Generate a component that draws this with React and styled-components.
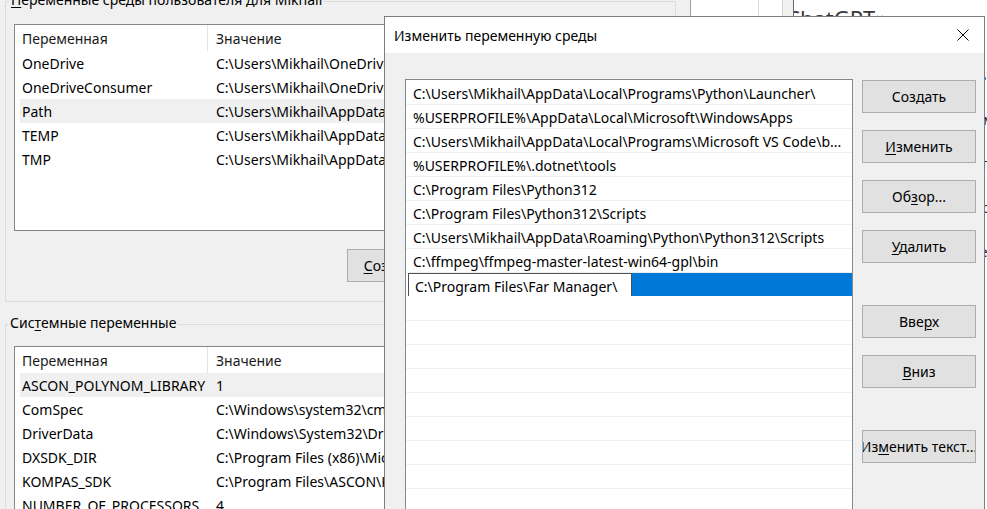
import React from 'react';
import styled, { createGlobalStyle } from 'styled-components';

const GlobalStyle = createGlobalStyle`
  html, body { margin: 0; padding: 0; background: #f0f0f0; }
  body {
    font-family: "Noto Sans", "Open Sans", sans-serif;
    font-size: 14px;
    color: #000;
    overflow: hidden;
  }
  * { box-sizing: border-box; }
`;

const Desktop = styled.div`
  position: relative;
  width: 987px;
  height: 509px;
  overflow: hidden;
  display: flex;
`;

/* ---------- background "Environment variables" window ---------- */
const EnvWindow = styled.div`
  width: 676px;
  flex: none;
  background: #f0f0f0;
  display: flex;
  flex-direction: column;
  padding-left: 5px;
`;

const GroupBox = styled.section`
  display: flex;
  flex-direction: column;
  margin-top: ${p => p.$top}px;
  flex: ${p => (p.$grow ? 1 : 'none')};
`;

const GroupHead = styled.div`
  height: 20px;
  display: flex;
  line-height: 20px;
  &::before {
    content: '';
    width: ${p => p.$lead}px;
    height: 8px;
    align-self: flex-end;
    border-top: 1px solid #dcdcdc;
    border-left: 1px solid #dcdcdc;
  }
  &::after {
    content: '';
    flex: 1;
    height: 8px;
    align-self: flex-end;
    border-top: 1px solid #dcdcdc;
    border-right: 1px solid #dcdcdc;
  }
`;

const GroupTitle = styled.span`
  padding: 0 2px;
  white-space: nowrap;
  color: #000;
`;

const GroupBody = styled.div`
  border: 1px solid #dcdcdc;
  border-top: none;
  ${p => (p.$open ? 'border-bottom: none;' : '')}
  padding: ${p => p.$pad};
  display: flex;
  flex-direction: column;
  flex: 1;
`;

const ListView = styled.div`
  background: #fff;
  border: 1px solid #828790;
  padding-left: 5px;
  height: ${p => p.$h || 'auto'};
  flex: ${p => (p.$grow ? 1 : 'none')};
  overflow: hidden;
`;

const LVHeader = styled.div`
  display: grid;
  grid-template-columns: 194px 1fr;
  height: 26px;
  align-items: center;
  color: #1a1a1a;
`;

const LVHeadCell = styled.div`
  position: relative;
  padding-left: 2px;
  height: 100%;
  display: flex;
  align-items: center;
  &::after {
    content: ${p => (p.$sep ? "''" : 'none')};
    position: absolute;
    right: 6px;
    top: 0;
    bottom: 0;
    width: 1px;
    background: #e5e5e5;
  }
`;

const LVRow = styled.div`
  display: grid;
  grid-template-columns: 194px 1fr;
  height: 24px;
  align-items: center;
  background: ${p => (p.$hl ? '#f0f0f0' : 'transparent')};
  white-space: nowrap;
`;

const LVCell = styled.div`
  padding-left: 2px;
  overflow: hidden;
`;

const ButtonRow = styled.div`
  display: flex;
  justify-content: flex-end;
  gap: 9px;
  margin-top: 18px;
`;

const WinButton = styled.button`
  font: inherit;
  color: #000;
  background: #e1e1e1;
  border: 1px solid #adadad;
  height: 33px;
  width: ${p => p.$w || 114}px;
  padding: 0;
  display: flex;
  align-items: center;
  justify-content: center;
  white-space: nowrap;
  overflow: hidden;
  flex: none;
`;

const Mn = styled.span`
  text-decoration: underline;
  text-underline-offset: 2px;
`;

/* ---------- browser window behind, at right ---------- */
const Browser = styled.div`
  flex: 1;
  display: flex;
  background: #fff;
`;

const BrowserGap = styled.div`
  width: 14px;
  background: #f0f0f0;
`;

const BrowserPane = styled.div`
  width: ${p => p.$w}px;
  border-left: 1px solid ${p => p.$line};
  background: ${p => p.$bg || '#fff'};
`;

const BrowserContent = styled.div`
  flex: 1;
  overflow: hidden;
  padding-top: 7px;
  border-left: 1px solid #6a6a6a;
`;

const BrowserTitle = styled.div`
  font-size: 22px;
  line-height: 22px;
  color: #3a3a3a;
  white-space: nowrap;
  text-indent: -8px;
  display: flex;
  align-items: center;
  gap: 8px;
`;

const Chevron = styled.span`
  font-size: 13px;
  color: #9a9a9a;
`;

const BrowserText = styled.div`
  margin-top: 24px;
  padding-left: 4px;
  font-size: 15px;
  line-height: 44px;
  color: #222;
  white-space: nowrap;
`;

/* ---------- the edit dialog ---------- */
const Dialog = styled.div`
  position: absolute;
  left: 384px;
  top: 16px;
  width: 601px;
  height: 520px;
  border: 1px solid #7d7d7d;
  background: #f0f0f0;
  display: flex;
  flex-direction: column;
`;

const TitleBar = styled.div`
  height: 36px;
  background: #fff;
  display: flex;
  align-items: center;
  justify-content: space-between;
  padding-left: 9px;
  flex: none;
`;

const TitleText = styled.span`
  font-size: 14px;
  color: #000;
  padding-top: 1px;
`;

const CloseBtn = styled.div`
  width: 42px;
  height: 100%;
  display: flex;
  align-items: center;
  justify-content: center;
`;

const DialogBody = styled.div`
  flex: 1;
  display: flex;
  padding: 26px 0 0 20px;
  gap: 9px;
`;

const PathList = styled.div`
  width: 448px;
  background: #fff;
  border: 1px solid #828790;
  padding-top: 1px;
  overflow: hidden;
  flex: none;
`;

const PathRow = styled.div`
  height: 24px;
  border-bottom: 1px solid #efefef;
  padding-left: ${p => (p.$sel ? 2 : 7)}px;
  display: flex;
  align-items: center;
  white-space: nowrap;
  overflow: hidden;
  ${p => (p.$sel ? 'border-bottom-color: transparent;' : '')}
`;

const PathText = styled.span`
  padding-top: 1px;
`;

const EditBox = styled.div`
  width: 224px;
  height: 25px;
  align-self: flex-start;
  border: 1px solid #505050;
  background: #fff;
  padding-left: 6px;
  display: flex;
  align-items: center;
  flex: none;
`;

const SelFill = styled.div`
  flex: 1;
  align-self: flex-start;
  height: 24px;
  background: #0078d7;
`;

const ButtonColumn = styled.div`
  display: flex;
  flex-direction: column;
  gap: 42px;
  padding-top: 1px;
`;

const ButtonGroup = styled.div`
  display: flex;
  flex-direction: column;
  gap: 17px;
`;

const userVars = [
  ['OneDrive', 'C:\\Users\\Mikhail\\OneDrive'],
  ['OneDriveConsumer', 'C:\\Users\\Mikhail\\OneDrive'],
  ['Path', 'C:\\Users\\Mikhail\\AppData\\Local\\Programs\\Python\\Launcher\\;%USERPROFILE%\\AppData', true],
  ['TEMP', 'C:\\Users\\Mikhail\\AppData\\Local\\Temp'],
  ['TMP', 'C:\\Users\\Mikhail\\AppData\\Local\\Temp'],
];

const sysVars = [
  ['ASCON_POLYNOM_LIBRARY', '1', true],
  ['ComSpec', 'C:\\Windows\\system32\\cmd.exe'],
  ['DriverData', 'C:\\Windows\\System32\\Drivers\\DriverData'],
  ['DXSDK_DIR', 'C:\\Program Files (x86)\\Microsoft DirectX SDK (June 2010)\\'],
  ['KOMPAS_SDK', 'C:\\Program Files\\ASCON\\KOMPAS-3D v22\\SDK\\'],
  ['NUMBER_OF_PROCESSORS', '4'],
];

const paths = [
  'C:\\Users\\Mikhail\\AppData\\Local\\Programs\\Python\\Launcher\\',
  '%USERPROFILE%\\AppData\\Local\\Microsoft\\WindowsApps',
  'C:\\Users\\Mikhail\\AppData\\Local\\Programs\\Microsoft VS Code\\b...',
  '%USERPROFILE%\\.dotnet\\tools',
  'C:\\Program Files\\Python312',
  'C:\\Program Files\\Python312\\Scripts',
  'C:\\Users\\Mikhail\\AppData\\Roaming\\Python\\Python312\\Scripts',
  'C:\\ffmpeg\\ffmpeg-master-latest-win64-gpl\\bin',
];

function VarList({ rows, grow, h }) {
  return (
    <ListView $grow={grow} $h={h}>
      <LVHeader>
        <LVHeadCell $sep>Переменная</LVHeadCell>
        <LVHeadCell>Значение</LVHeadCell>
      </LVHeader>
      {rows.map(([n, v, hl]) => (
        <LVRow key={n} $hl={hl}>
          <LVCell>{n}</LVCell>
          <LVCell>{v}</LVCell>
        </LVRow>
      ))}
    </ListView>
  );
}

export default function App() {
  return (
    <>
      <GlobalStyle />
      <Desktop>
        <EnvWindow>
          <GroupBox $top={-10}>
            <GroupHead $lead={3}>
              <GroupTitle><Mn>П</Mn>еременные среды пользователя для Mikhail</GroupTitle>
            </GroupHead>
            <GroupBody $pad="14px 13px 19px 8px">
              <VarList rows={userVars} h="207px" />
              <ButtonRow>
                <WinButton $w={99}><span><Mn>С</Mn>оздать...</span></WinButton>
                <WinButton $w={99}><span><Mn>И</Mn>зменить...</span></WinButton>
                <WinButton $w={99}><span><Mn>У</Mn>далить</span></WinButton>
              </ButtonRow>
            </GroupBody>
          </GroupBox>
          <GroupBox $top={11} $grow>
            <GroupHead $lead={2}>
              <GroupTitle>Сис<Mn>т</Mn>емные переменные</GroupTitle>
            </GroupHead>
            <GroupBody $pad="13px 13px 0 8px" $open>
              <VarList rows={sysVars} grow />
            </GroupBody>
          </GroupBox>
        </EnvWindow>

        <Browser>
          <BrowserGap />
          <BrowserPane $w={68} $line="#a0a0a0" />
          <BrowserPane $w={24} $line="#dadada" />
          <BrowserPane $w={11} $line="#d4d4d4" $bg="#f0f0f0" />
          <BrowserContent>
            <BrowserTitle>ChatGPT <Chevron>∨</Chevron></BrowserTitle>
            <BrowserText>
              <div>Привет! Чем могу помочь?</div>
              <div>Чтобы добавить программу в PATH</div>
              <div>Откройте параметры системы</div>
              <div>Нажмите «Переменные среды»</div>
              <div>Выберите Path и нажмите</div>
              <div>Добавьте путь к папке</div>
              <div>Сохраните изменения</div>
              <div>Перезапустите терминал</div>
              <div>Готово</div>
            </BrowserText>
          </BrowserContent>
        </Browser>

        <Dialog>
          <TitleBar>
            <TitleText>Изменить переменную среды</TitleText>
            <CloseBtn>
              <svg width="12" height="12" viewBox="0 0 12 12">
                <path d="M0.5 0.5 L11.5 11.5 M11.5 0.5 L0.5 11.5" stroke="#000" strokeWidth="1" fill="none" />
              </svg>
            </CloseBtn>
          </TitleBar>
          <DialogBody>
            <PathList>
              {paths.map(p => (
                <PathRow key={p}><PathText>{p}</PathText></PathRow>
              ))}
              <PathRow $sel>
                <EditBox><PathText>C:\Program Files\Far Manager\</PathText></EditBox>
                <SelFill />
              </PathRow>
              {Array.from({ length: 10 }).map((_, i) => (
                <PathRow key={'e' + i} />
              ))}
            </PathList>
            <ButtonColumn>
              <ButtonGroup>
                <WinButton><span>Создать</span></WinButton>
                <WinButton><span><Mn>И</Mn>зменить</span></WinButton>
                <WinButton><span>Об<Mn>з</Mn>ор...</span></WinButton>
                <WinButton><span><Mn>У</Mn>далить</span></WinButton>
              </ButtonGroup>
              <ButtonGroup>
                <WinButton><span>Вве<Mn>р</Mn>х</span></WinButton>
                <WinButton><span><Mn>В</Mn>низ</span></WinButton>
              </ButtonGroup>
              <ButtonGroup>
                <WinButton><span>Из<Mn>м</Mn>енить текст...</span></WinButton>
              </ButtonGroup>
            </ButtonColumn>
          </DialogBody>
        </Dialog>
      </Desktop>
    </>
  );
}
